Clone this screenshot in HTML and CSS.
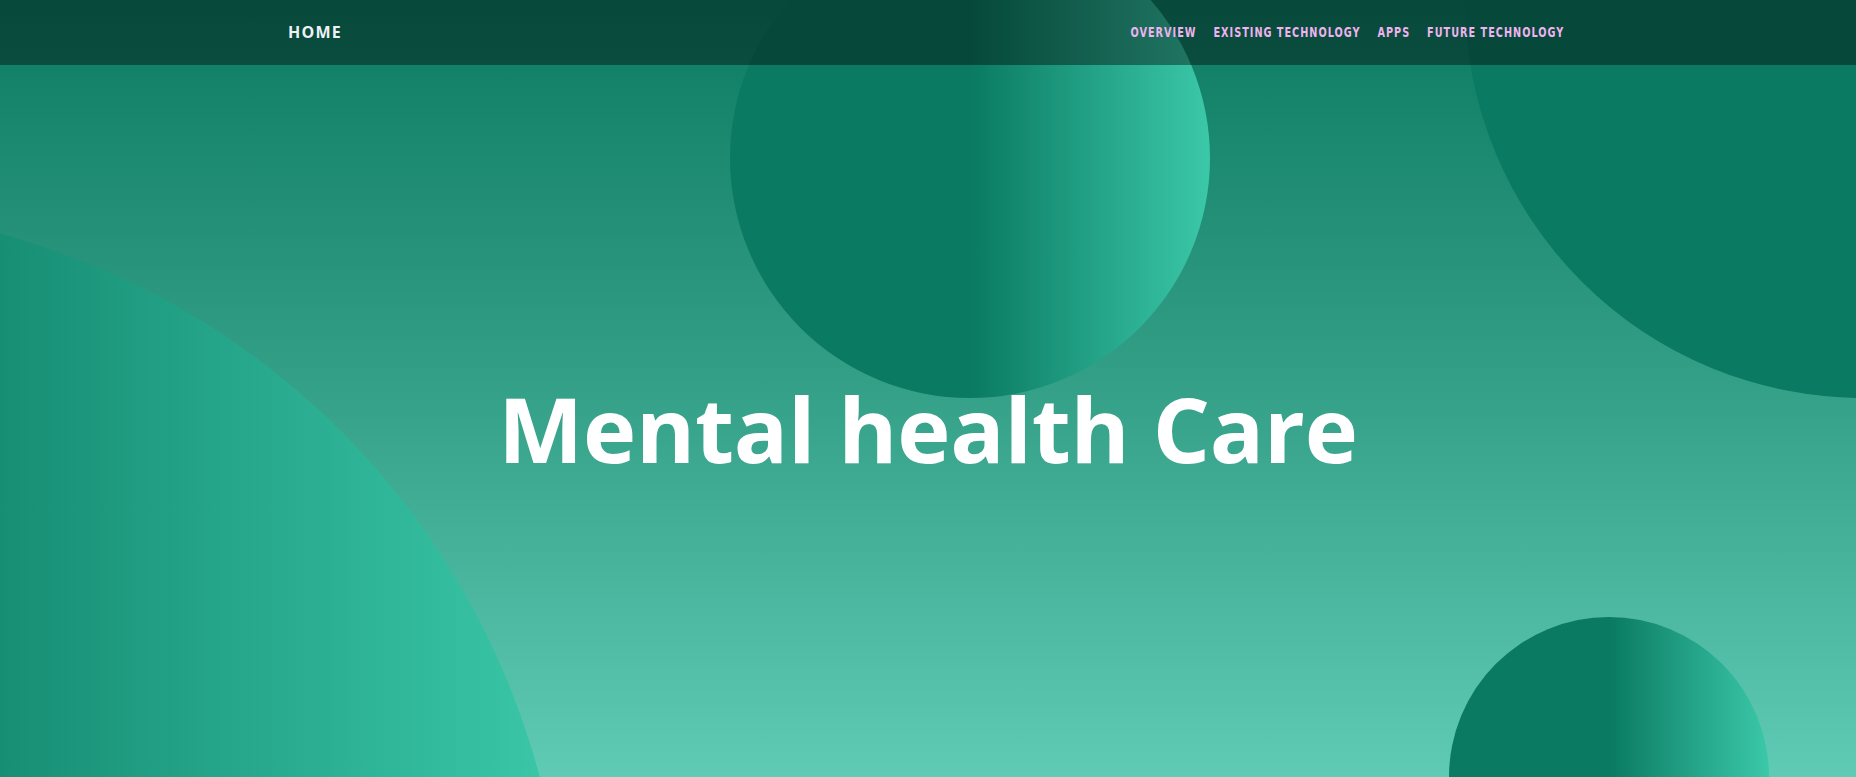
FILE: index.html
```html
<!DOCTYPE html>
<html lang="en">
<head>
<meta charset="utf-8">
<title>Mental health Care</title>
<link rel="stylesheet" href="styles.css">
</head>
<body>
<div class="hero">
  <div class="circle circle-top"></div>
  <div class="circle circle-corner"></div>
  <div class="circle circle-bottom"></div>
  <div class="circle circle-left"></div>
  <header class="nav">
    <div class="nav-inner">
      <a class="brand" href="#">HOME</a>
      <nav class="links">
        <a href="#">OVERVIEW</a>
        <a href="#">EXISTING TECHNOLOGY</a>
        <a href="#">APPS</a>
        <a href="#">FUTURE TECHNOLOGY</a>
      </nav>
    </div>
  </header>
  <h1 class="title">Mental health Care</h1>
</div>
</body>
</html>
```
FILE: styles.css
```css
* { box-sizing: border-box; }
html, body { margin: 0; padding: 0; }
body { font-family: "Open Sans", "Noto Sans", sans-serif; overflow: hidden; }

.hero {
  position: relative;
  height: 777px;
  overflow: hidden;
  background: linear-gradient(to bottom, #0c7a62 0%, #35a088 50%, #60cbb4 100%);
  display: flex;
  flex-direction: column;
  align-items: center;
  justify-content: center;
}

.circle {
  position: absolute;
  border-radius: 50%;
  background: linear-gradient(to right, #0a7a62 50%, #3bc8a9 100%);
}
.circle-top { left: 730px; top: -82px; width: 480px; height: 480px; }
.circle-corner { left: 1465px; top: -398px; width: 796px; height: 796px; }
.circle-bottom { left: 1449px; top: 617px; width: 320px; height: 320px; }
.circle-left { left: -965px; top: 207px; width: 1530px; height: 1530px; }

.nav {
  position: absolute;
  top: 0; left: 0; right: 0;
  height: 65px;
  background: rgba(0, 0, 0, 0.4);
  z-index: 2;
}
.nav-inner {
  width: 1280px;
  height: 100%;
  margin: 0 auto;
  display: flex;
  align-items: center;
  justify-content: space-between;
}
.brand {
  color: #eef2f6;
  text-decoration: none;
  font-family: "Open Sans", sans-serif;
  font-weight: 700;
  font-size: 16px;
  letter-spacing: 1.2px;
  margin-top: -2px;
}
.links {
  display: flex;
  gap: 22px;
  margin-right: 4px;
  margin-top: -2px;
  transform: scaleX(0.77);
  transform-origin: right center;
}
.links a {
  color: #efb3ef;
  text-decoration: none;
  font-family: "DejaVu Sans Condensed", "DejaVu Sans", sans-serif;
  font-weight: 700;
  font-size: 14px;
  letter-spacing: 1.3px;
}

.title {
  position: relative;
  z-index: 1;
  margin: 0;
  padding-top: 78px;
  color: #ffffff;
  font-family: "Open Sans", sans-serif;
  font-weight: 700;
  font-size: 90px;
  letter-spacing: -0.2px;
}
```
